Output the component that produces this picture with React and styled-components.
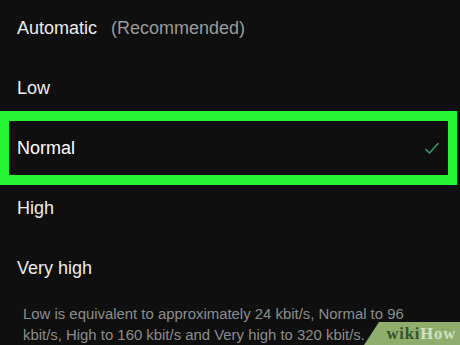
import styled, { createGlobalStyle } from "styled-components";

const Global = createGlobalStyle`
  html, body {
    margin: 0;
    padding: 0;
    background: #0f0f0f;
  }
  body {
    width: 460px;
    height: 345px;
    overflow: hidden;
    font-family: "Liberation Sans", Arial, sans-serif;
  }
`;

const Screen = styled.div`
  position: relative;
  width: 460px;
  height: 345px;
  background: #0f0f0f;
  overflow: hidden;
  display: flex;
  flex-direction: column;
`;

const List = styled.div`
  display: flex;
  flex-direction: column;
  margin-top: -2px;
`;

const Row = styled.div`
  position: relative;
  height: 60px;
  display: flex;
  align-items: center;
  justify-content: space-between;
  padding: 0 22px 0 17px;
  font-size: 18px;
  color: ${(p) => (p.selected ? "#ffffff" : "#ececec")};

  ${(p) =>
    p.selected &&
    `
    &::after {
      content: "";
      position: absolute;
      top: -7px;
      bottom: -7px;
      left: 0;
      right: 3px;
      border: 9px solid #24f434;
      border-top-width: 10px;
      border-bottom-width: 10px;
      pointer-events: none;
    }
  `}
`;

const Label = styled.span`
  display: flex;
  gap: 14px;
`;

const Hint = styled.span`
  color: #9a9a9a;
`;

const Check = styled.svg`
  width: 16px;
  height: 14px;
  margin-right: -2px;
`;

const Note = styled.p`
  margin: 6px 0 0;
  padding: 0 40px 0 23px;
  font-size: 14.9px;
  line-height: 21px;
  color: #8c8c8c;
`;

const Badge = styled.div`
  position: absolute;
  right: 0;
  bottom: 0;
  width: 96px;
  height: 23px;
  background: #8fad6c;
  clip-path: polygon(15px 0, 100% 0, 100% 100%, 0 100%);
  display: flex;
  align-items: center;
  justify-content: flex-end;
  padding-right: 4px;
  box-sizing: border-box;
  font-family: "Liberation Serif", "Times New Roman", serif;
  font-weight: bold;
  font-size: 16.5px;
  letter-spacing: 0.9px;
`;

const Wiki = styled.span`
  color: #35532a;
`;

const How = styled.span`
  color: #d4e0c6;
`;

const options = [
  { label: "Automatic", hint: "(Recommended)" },
  { label: "Low" },
  { label: "Normal", selected: true },
  { label: "High" },
  { label: "Very high" },
];

function App() {
  return (
    <Screen>
      <Global />
      <List>
        {options.map((o) => (
          <Row key={o.label} selected={o.selected}>
            <Label>
              {o.label}
              {o.hint && <Hint>{o.hint}</Hint>}
            </Label>
            {o.selected && (
              <Check viewBox="0 0 16 14">
                <path d="M1.5 8 L5.5 12 L14.5 2" fill="none" stroke="#3fa46a" strokeWidth="1.3" />
              </Check>
            )}
          </Row>
        ))}
      </List>
      <Note>
        Low is equivalent to approximately 24 kbit/s, Normal to 96 kbit/s, High to 160 kbit/s and Very high to 320 kbit/s.
      </Note>
      <Badge>
        <Wiki>wiki</Wiki>
        <How>How</How>
      </Badge>
    </Screen>
  );
}

export default App;
